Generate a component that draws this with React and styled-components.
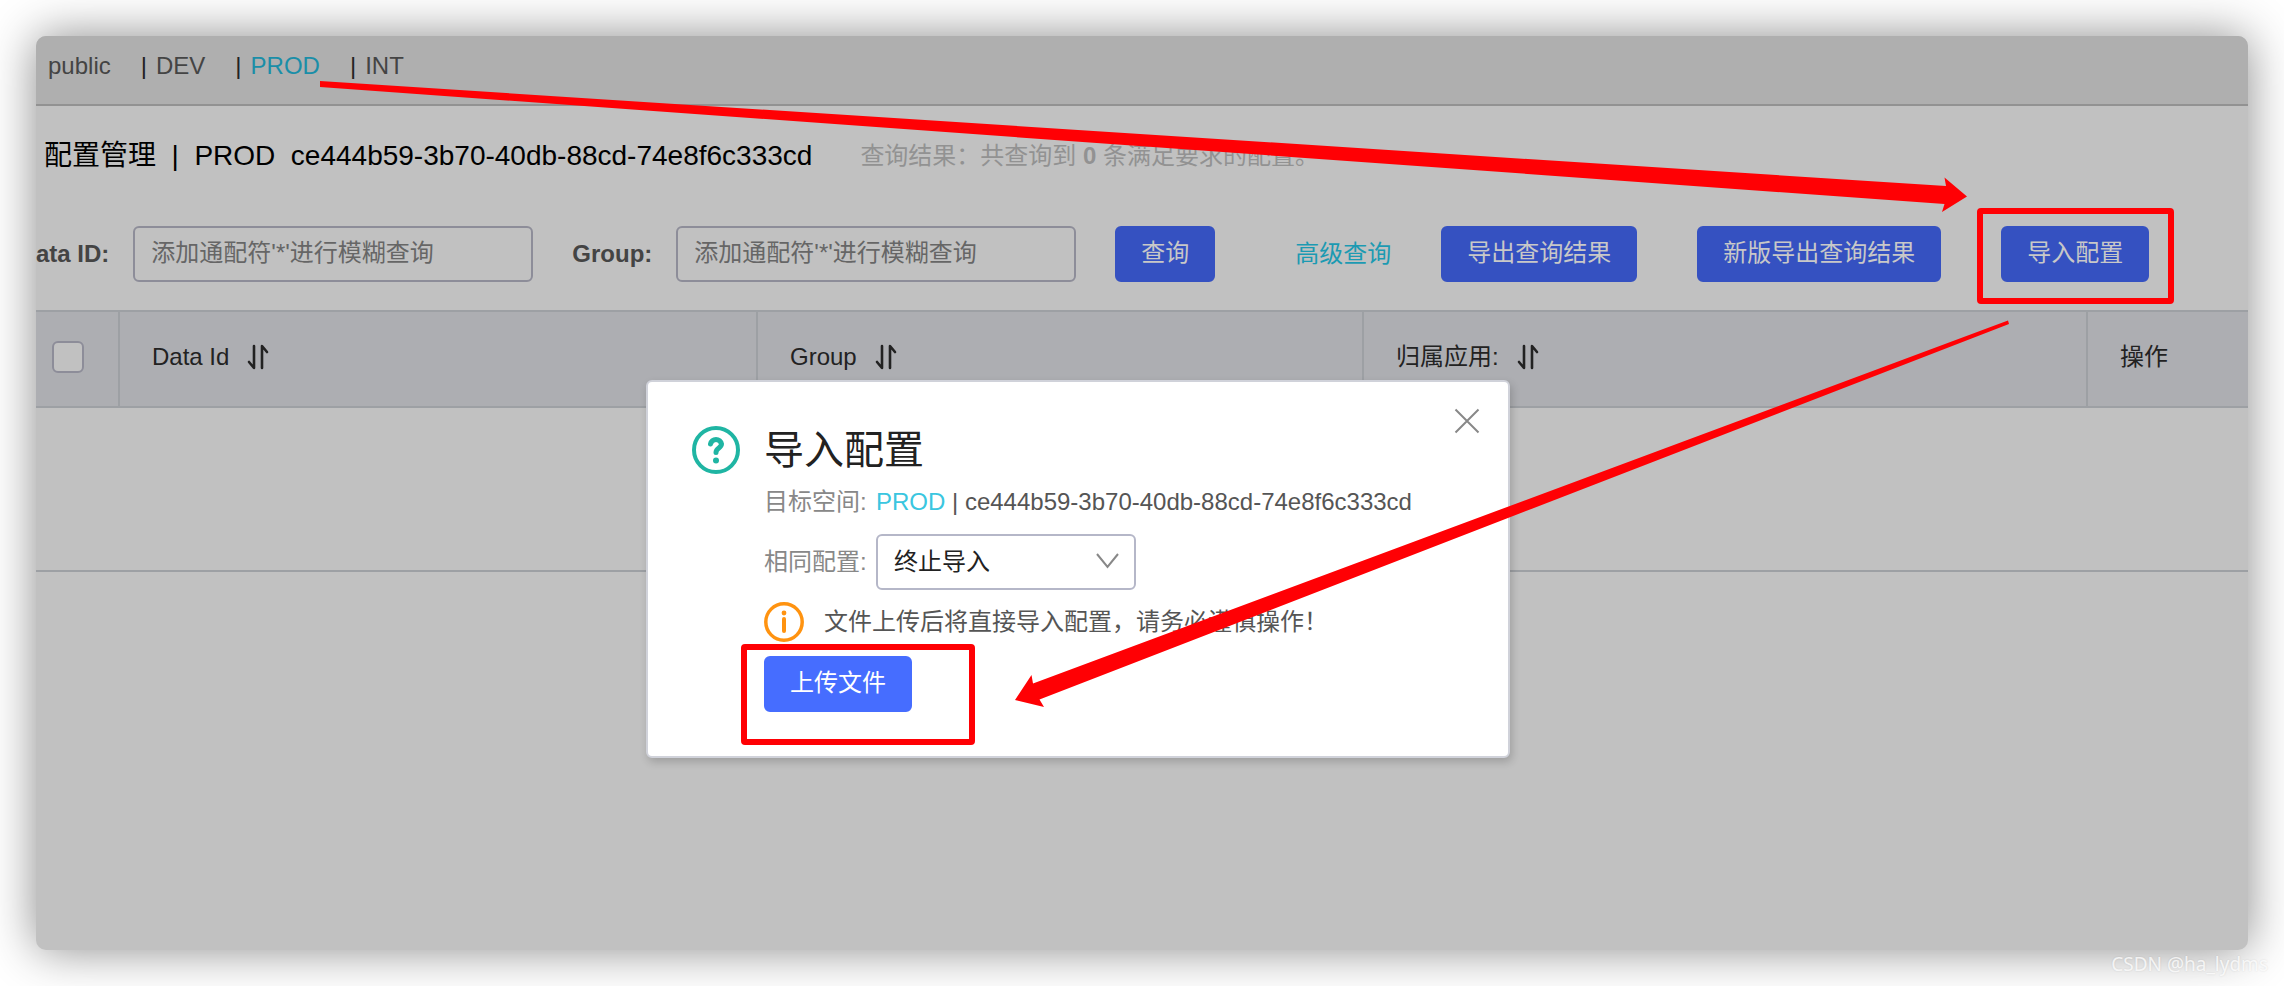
import styled, { createGlobalStyle } from "styled-components";

const GlobalStyle = createGlobalStyle`
    * {
        box-sizing: border-box;
    }
    body {
        margin: 0;
        background: #fff;
        font-family: "Liberation Sans", "Noto Sans CJK SC", sans-serif;
        font-size: 24px;
        line-height: 32px;
        color: #444;
    }
    button, input, select {
        font: inherit;
    }
`

const Screen = styled.div`
    position: relative;
    display: flex;
    min-height: 100vh;
    padding: 36px;
    overflow: hidden;
`

const Window = styled.main`
    position: relative;
    flex: 1;
    min-width: 0;
    border-radius: 10px;
    background: #c1c1c1;
    box-shadow: 0 0 48px rgba(0, 0, 0, 0.46);
`

const NamespaceBar = styled.nav`
    display: flex;
    align-items: center;
    height: 70px;
    padding: 0 12px 8px;
    border-bottom: 2px solid #929292;
    border-radius: 10px 10px 0 0;
    background: #afafaf;
`

const Namespace = styled.a`
    margin-right: 30px;
    color: ${({ $active }) => ($active ? "#1a8ea8" : "#444")};
    text-decoration: none;
`

const Divider = styled.span`
    margin-right: 9px;
    color: #222;
`

const TitleRow = styled.header`
    display: flex;
    align-items: center;
    gap: 48px;
    padding: 30px 8px 0;
`

const Title = styled.h1`
    margin: 0;
    font-size: 28px;
    font-weight: 400;
    line-height: 40px;
    color: #000;
    white-space: pre;
`

const Result = styled.span`
    color: #929292;
`

const Toolbar = styled.form`
    display: flex;
    align-items: center;
    padding: 50px 0 28px;
    white-space: nowrap;
`

const Label = styled.label`
    margin-right: 24px;
    font-weight: 700;
`

const TextInput = styled.input`
    width: 400px;
    height: 56px;
    margin-right: 39px;
    padding: 0 16px 2px;
    border: 2px solid #8d8d99;
    border-radius: 6px;
    outline: none;
    background: transparent;
    &::placeholder {
        color: #666;
        opacity: 1;
    }
`

const Button = styled.button`
    height: 56px;
    padding: 0 24px 2px;
    border: 2px solid ${({ $bright }) => ($bright ? "#466dff" : "#3551c1")};
    border-radius: 6px;
    background: ${({ $bright }) => ($bright ? "#466dff" : "#3551c1")};
    color: ${({ $bright }) => ($bright ? "#fff" : "#c8c8c8")};
    cursor: pointer;
`

const AdvancedLink = styled.a`
    margin: 0 50px 0 80px;
    color: #1c9ab2;
    text-decoration: none;
`

const Exports = styled.div`
    display: flex;
    gap: 60px;
`

const Table = styled.table`
    width: 100%;
    border-spacing: 0;
    border-top: 2px solid #9da0a4;
    table-layout: fixed;
`

const HeadCell = styled.th`
    width: ${({ $width }) => $width || "auto"};
    height: 96px;
    padding: ${({ $tight }) => ($tight ? "0 16px 4px" : "0 32px 4px")};
    border-right: 2px solid #9da0a4;
    border-bottom: 2px solid #9da0a4;
    background: #adaeb2;
    color: #222;
    font-weight: 400;
    text-align: left;
    &:last-child {
        border-right: 0;
    }
`

const HeadContent = styled.span`
    display: flex;
    align-items: center;
    gap: 18px;
`

const EmptyCell = styled.td`
    height: 164px;
    border-bottom: 2px solid #9da0a4;
`

const Checkbox = styled.input`
    display: block;
    width: 32px;
    height: 32px;
    margin: 0;
    border: 2px solid #8d8d99;
    border-radius: 6px;
    background: #c1c1c1;
    appearance: none;
`

const Dialog = styled.section`
    position: absolute;
    top: 344px;
    left: 610px;
    display: flex;
    gap: 24px;
    width: 864px;
    padding: 40px 44px 44px;
    border: 2px solid #d0d2da;
    border-radius: 6px;
    background: #fff;
    box-shadow: 2px 4px 8px rgba(0, 0, 0, 0.18);
    > svg {
        flex: none;
        margin-top: 4px;
    }
`

const DialogBody = styled.div`
    flex: 1;
`

const DialogTitle = styled.h2`
    margin: 0;
    color: #222;
    font-size: 40px;
    font-weight: 400;
    line-height: 56px;
`

const DialogLine = styled.div`
    display: flex;
    align-items: center;
    gap: 8px;
    margin: 8px 0 16px;
    color: #555;
`

const Caption = styled.label`
    width: 104px;
    color: #888;
    white-space: nowrap;
`

const Cyan = styled.span`
    color: #3ac6e0;
`

const PolicyRow = styled(DialogLine)`
    margin: 0;
`

const SelectBox = styled.div`
    position: relative;
    width: 260px;
    svg {
        position: absolute;
        top: 18px;
        right: 16px;
        pointer-events: none;
    }
`

const Select = styled.select`
    width: 100%;
    height: 56px;
    padding: 0 16px;
    border: 2px solid #b5b7c8;
    border-radius: 6px;
    background: #fff;
    color: #222;
    appearance: none;
`

const Warning = styled.p`
    display: flex;
    align-items: center;
    gap: 20px;
    margin: 12px 0 14px;
    color: #555;
`

const CloseButton = styled.button`
    position: absolute;
    top: 24px;
    right: 26px;
    display: flex;
    padding: 0;
    border: 0;
    background: none;
    cursor: pointer;
`

const Annotations = styled.svg`
    position: absolute;
    inset: 0;
    width: 100%;
    height: 100%;
    pointer-events: none;
`

const Watermark = styled.span`
    position: absolute;
    right: 16px;
    bottom: 8px;
    color: rgba(255, 255, 255, 0.8);
    font-family: "Noto Sans", sans-serif;
    font-size: 19px;
    line-height: 28px;
    text-shadow: 0 0 2px rgba(0, 0, 0, 0.12);
`

const SortIcon = () => (
    <svg width="22" height="26" viewBox="0 0 22 26" fill="none" stroke="#222" strokeWidth="2.600" strokeLinecap="round" strokeLinejoin="round">
        <path d="M7 2V24L2 18" />
        <path d="M15 24V2L20 8" />
    </svg>
)

const HelpIcon = () => (
    <svg width="48" height="48" viewBox="0 0 48 48" fill="none" stroke="#1fb5a3" strokeWidth="4">
        <circle cx="24" cy="24" r="22" />
        <path d="M18.500 18A5.600 5.600 0 0 1 29.500 18C29.500 22 24 22 24 26.500" strokeWidth="5" strokeLinecap="round" />
        <circle cx="24" cy="34.500" r="3" fill="#1fb5a3" stroke="none" />
    </svg>
)

const InfoIcon = () => (
    <svg width="40" height="40" viewBox="0 0 40 40" fill="none" stroke="#ff9310" strokeWidth="3.500">
        <circle cx="20" cy="20" r="18.200" />
        <path d="M20 17V29" strokeWidth="4" strokeLinecap="round" />
        <circle cx="20" cy="11" r="2.400" fill="#ff9310" stroke="none" />
    </svg>
)

const SearchField = ({ id, label }) => (
    <>
        <Label htmlFor={id}>{label}</Label>
        <TextInput id={id} placeholder="添加通配符'*'进行模糊查询" />
    </>
)

const ImportDialog = () => (
    <Dialog role="dialog" aria-labelledby="import-title">
        <HelpIcon />
        <DialogBody>
            <DialogTitle id="import-title">导入配置</DialogTitle>
            <DialogLine>
                <Caption as="span">目标空间:</Caption>
                <span><Cyan>PROD</Cyan> | ce444b59-3b70-40db-88cd-74e8f6c333cd</span>
            </DialogLine>
            <PolicyRow>
                <Caption htmlFor="policy">相同配置:</Caption>
                <SelectBox>
                    <Select id="policy">
                        <option>终止导入</option>
                    </Select>
                    <svg width="24" height="18" viewBox="0 0 24 18" fill="none" stroke="#888" strokeWidth="2">
                        <path d="M1 2L11.500 15L22 2" />
                    </svg>
                </SelectBox>
            </PolicyRow>
            <Warning>
                <InfoIcon />
                文件上传后将直接导入配置，请务必谨慎操作！
            </Warning>
            <Button type="button" $bright>上传文件</Button>
        </DialogBody>
        <CloseButton type="button" aria-label="Close">
            <svg width="28" height="28" viewBox="0 0 28 28" stroke="#888" strokeWidth="2">
                <path d="M1.500 3.500L24.500 26.500M24.500 3.500L1.500 26.500" />
            </svg>
        </CloseButton>
    </Dialog>
)

const App = () => {
    return (
        <>
            <GlobalStyle />
            <Screen>
                <Window>
                    <NamespaceBar>
                        <Namespace href="#public">public</Namespace>
                        <Divider>|</Divider>
                        <Namespace href="#dev">DEV</Namespace>
                        <Divider>|</Divider>
                        <Namespace href="#prod" $active>PROD</Namespace>
                        <Divider>|</Divider>
                        <Namespace href="#int">INT</Namespace>
                    </NamespaceBar>
                    <TitleRow>
                        <Title>{"配置管理  |  PROD  ce444b59-3b70-40db-88cd-74e8f6c333cd"}</Title>
                        <Result>查询结果：共查询到 <b>0</b> 条满足要求的配置。</Result>
                    </TitleRow>
                    <Toolbar>
                        <SearchField id="data-id" label="ata ID:" />
                        <SearchField id="group" label="Group:" />
                        <Button type="button">查询</Button>
                        <AdvancedLink href="#advanced">高级查询</AdvancedLink>
                        <Exports>
                            <Button type="button">导出查询结果</Button>
                            <Button type="button">新版导出查询结果</Button>
                            <Button type="button">导入配置</Button>
                        </Exports>
                    </Toolbar>
                    <Table>
                        <thead>
                            <tr>
                                <HeadCell $width="84px" $tight>
                                    <Checkbox type="checkbox" aria-label="Select all" />
                                </HeadCell>
                                <HeadCell $width="638px">
                                    <HeadContent>Data Id <SortIcon /></HeadContent>
                                </HeadCell>
                                <HeadCell $width="606px">
                                    <HeadContent>Group <SortIcon /></HeadContent>
                                </HeadCell>
                                <HeadCell>
                                    <HeadContent>归属应用: <SortIcon /></HeadContent>
                                </HeadCell>
                                <HeadCell $width="160px">操作</HeadCell>
                            </tr>
                        </thead>
                        <tbody>
                            <tr>
                                <EmptyCell colSpan={5} />
                            </tr>
                        </tbody>
                    </Table>
                    <ImportDialog />
                </Window>
                <Annotations viewBox="0 0 2284 986" fill="#ff0004">
                    <path d="M320 81L1946 186L1944.500 177.500L1967 196.500L1942 212L1944.500 204L320 87Z" />
                    <path d="M2008 320.500L1033 683.500L1031.500 675L1015 700L1044 707L1039.500 699.500L2009 324Z" />
                    <rect x="1980" y="211" width="191" height="90" rx="1" fill="none" stroke="#ff0004" strokeWidth="6" />
                    <rect x="744" y="647" width="228" height="95" rx="1" fill="none" stroke="#ff0004" strokeWidth="6" />
                </Annotations>
                <Watermark>CSDN @ha_lydms</Watermark>
            </Screen>
        </>
    )
}

export default App
